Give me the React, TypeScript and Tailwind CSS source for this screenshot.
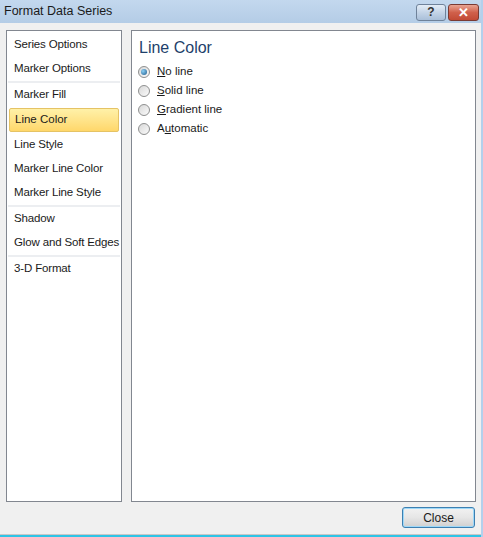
import React from "react";

const groups = [
  ["Series Options", "Marker Options"],
  ["Marker Fill", "Line Color", "Line Style", "Marker Line Color", "Marker Line Style"],
  ["Shadow", "Glow and Soft Edges"],
  ["3-D Format"],
];

const options = [
  { pre: "", key: "N", post: "o line", checked: true },
  { pre: "", key: "S", post: "olid line", checked: false },
  { pre: "", key: "G", post: "radient line", checked: false },
  { pre: "A", key: "u", post: "tomatic", checked: false },
];

function Radio({ checked }: { checked: boolean }) {
  return (
    <span className="w-[12px] h-[12px] rounded-full border border-[#8e8f8f] bg-gradient-to-br from-[#d8d8d8] to-[#fbfbfb] flex items-center justify-center shrink-0">
      {checked && (
        <span className="w-[6px] h-[6px] rounded-full bg-[radial-gradient(circle_at_35%_35%,#8cd0f5,#1d5a8c)]" />
      )}
    </span>
  );
}

export default function App() {
  return (
    <div className="w-[483px] h-[537px] bg-[#f0f0f0] flex flex-col font-['Liberation_Sans',sans-serif] text-[11.5px] text-[#1a1a1a] overflow-hidden border-r-[2px] border-[#b3d0ec]">
      {/* title bar */}
      <div className="h-[23px] shrink-0 bg-gradient-to-b from-[#c3d8ee] to-[#b4cce6] flex items-center pl-[4px] pr-[2px]">
        <span className="text-[#1a1a1a] text-[12.5px]">Format Data Series</span>
        <div className="ml-auto flex gap-[2px] pt-[1px]">
          <div className="w-[30px] h-[17px] rounded-[3px] border border-[#6f829a] bg-gradient-to-b from-[#e4edf7] via-[#c4d4e7] to-[#a9bfd9] flex items-center justify-center text-[#333] text-[12px] font-bold leading-none">
            ?
          </div>
          <div className="w-[31px] h-[17px] rounded-[3px] border border-[#7a3a33] bg-gradient-to-b from-[#e8a493] via-[#d0604b] to-[#c24a35] flex items-center justify-center text-white text-[13px] font-bold leading-none">
            ✕
          </div>
        </div>
      </div>

      {/* content */}
      <div className="flex gap-[9px] pl-[6px] pr-[5px] pt-[7px] h-[479px] shrink-0">
        <div className="w-[116px] border border-[#828790] bg-white pt-[2px] px-[1px]">
          {groups.map((g, gi) => (
            <div key={gi} className={gi > 0 ? "border-t-[2px] border-[#eceef1]" : ""}>
              {g.map((item) =>
                item === "Line Color" ? (
                  <div key={item} className="h-[26px] py-[1px]">
                    <div className="h-full mx-[1px] flex items-center pl-[5px] rounded-[2px] border border-[#e5c365] bg-gradient-to-b from-[#fff1a8] to-[#ffd76a]">
                      {item}
                    </div>
                  </div>
                ) : (
                  <div key={item} className="h-[24px] flex items-center pl-[6px] whitespace-nowrap tracking-[-0.15px]">
                    {item}
                  </div>
                )
              )}
            </div>
          ))}
        </div>

        <div className="flex-1 border border-[#828790] bg-white pl-[7px] pt-[6px]">
          <div className="text-[16px] text-[#1e3f6b] leading-[22px]">Line Color</div>
          <div className="flex flex-col pt-[3px]">
            {options.map((o) => (
              <div key={o.key} className="h-[19px] flex items-center gap-[7px] ml-[-1px]">
                <Radio checked={o.checked} />
                <span>
                  {o.pre}
                  <span className="underline">{o.key}</span>
                  {o.post}
                </span>
              </div>
            ))}
          </div>
        </div>
      </div>

      {/* footer */}
      <div className="flex justify-end pr-[6px] pt-[5px]">
        <button className="w-[73px] h-[21px] rounded-[3px] border border-[#3c7fb1] bg-gradient-to-b from-[#f2f2f2] via-[#e6e6e6] to-[#d0d0d0] shadow-[inset_0_0_0_1px_#9ed8f8] text-[#1a1a1a] text-[12px]">
          Close
        </button>
      </div>
      <div className="mt-auto h-[1px] bg-[#c8c8c8]" />
      <div className="h-[2px] bg-[#2ec4e6]" />
    </div>
  );
}
